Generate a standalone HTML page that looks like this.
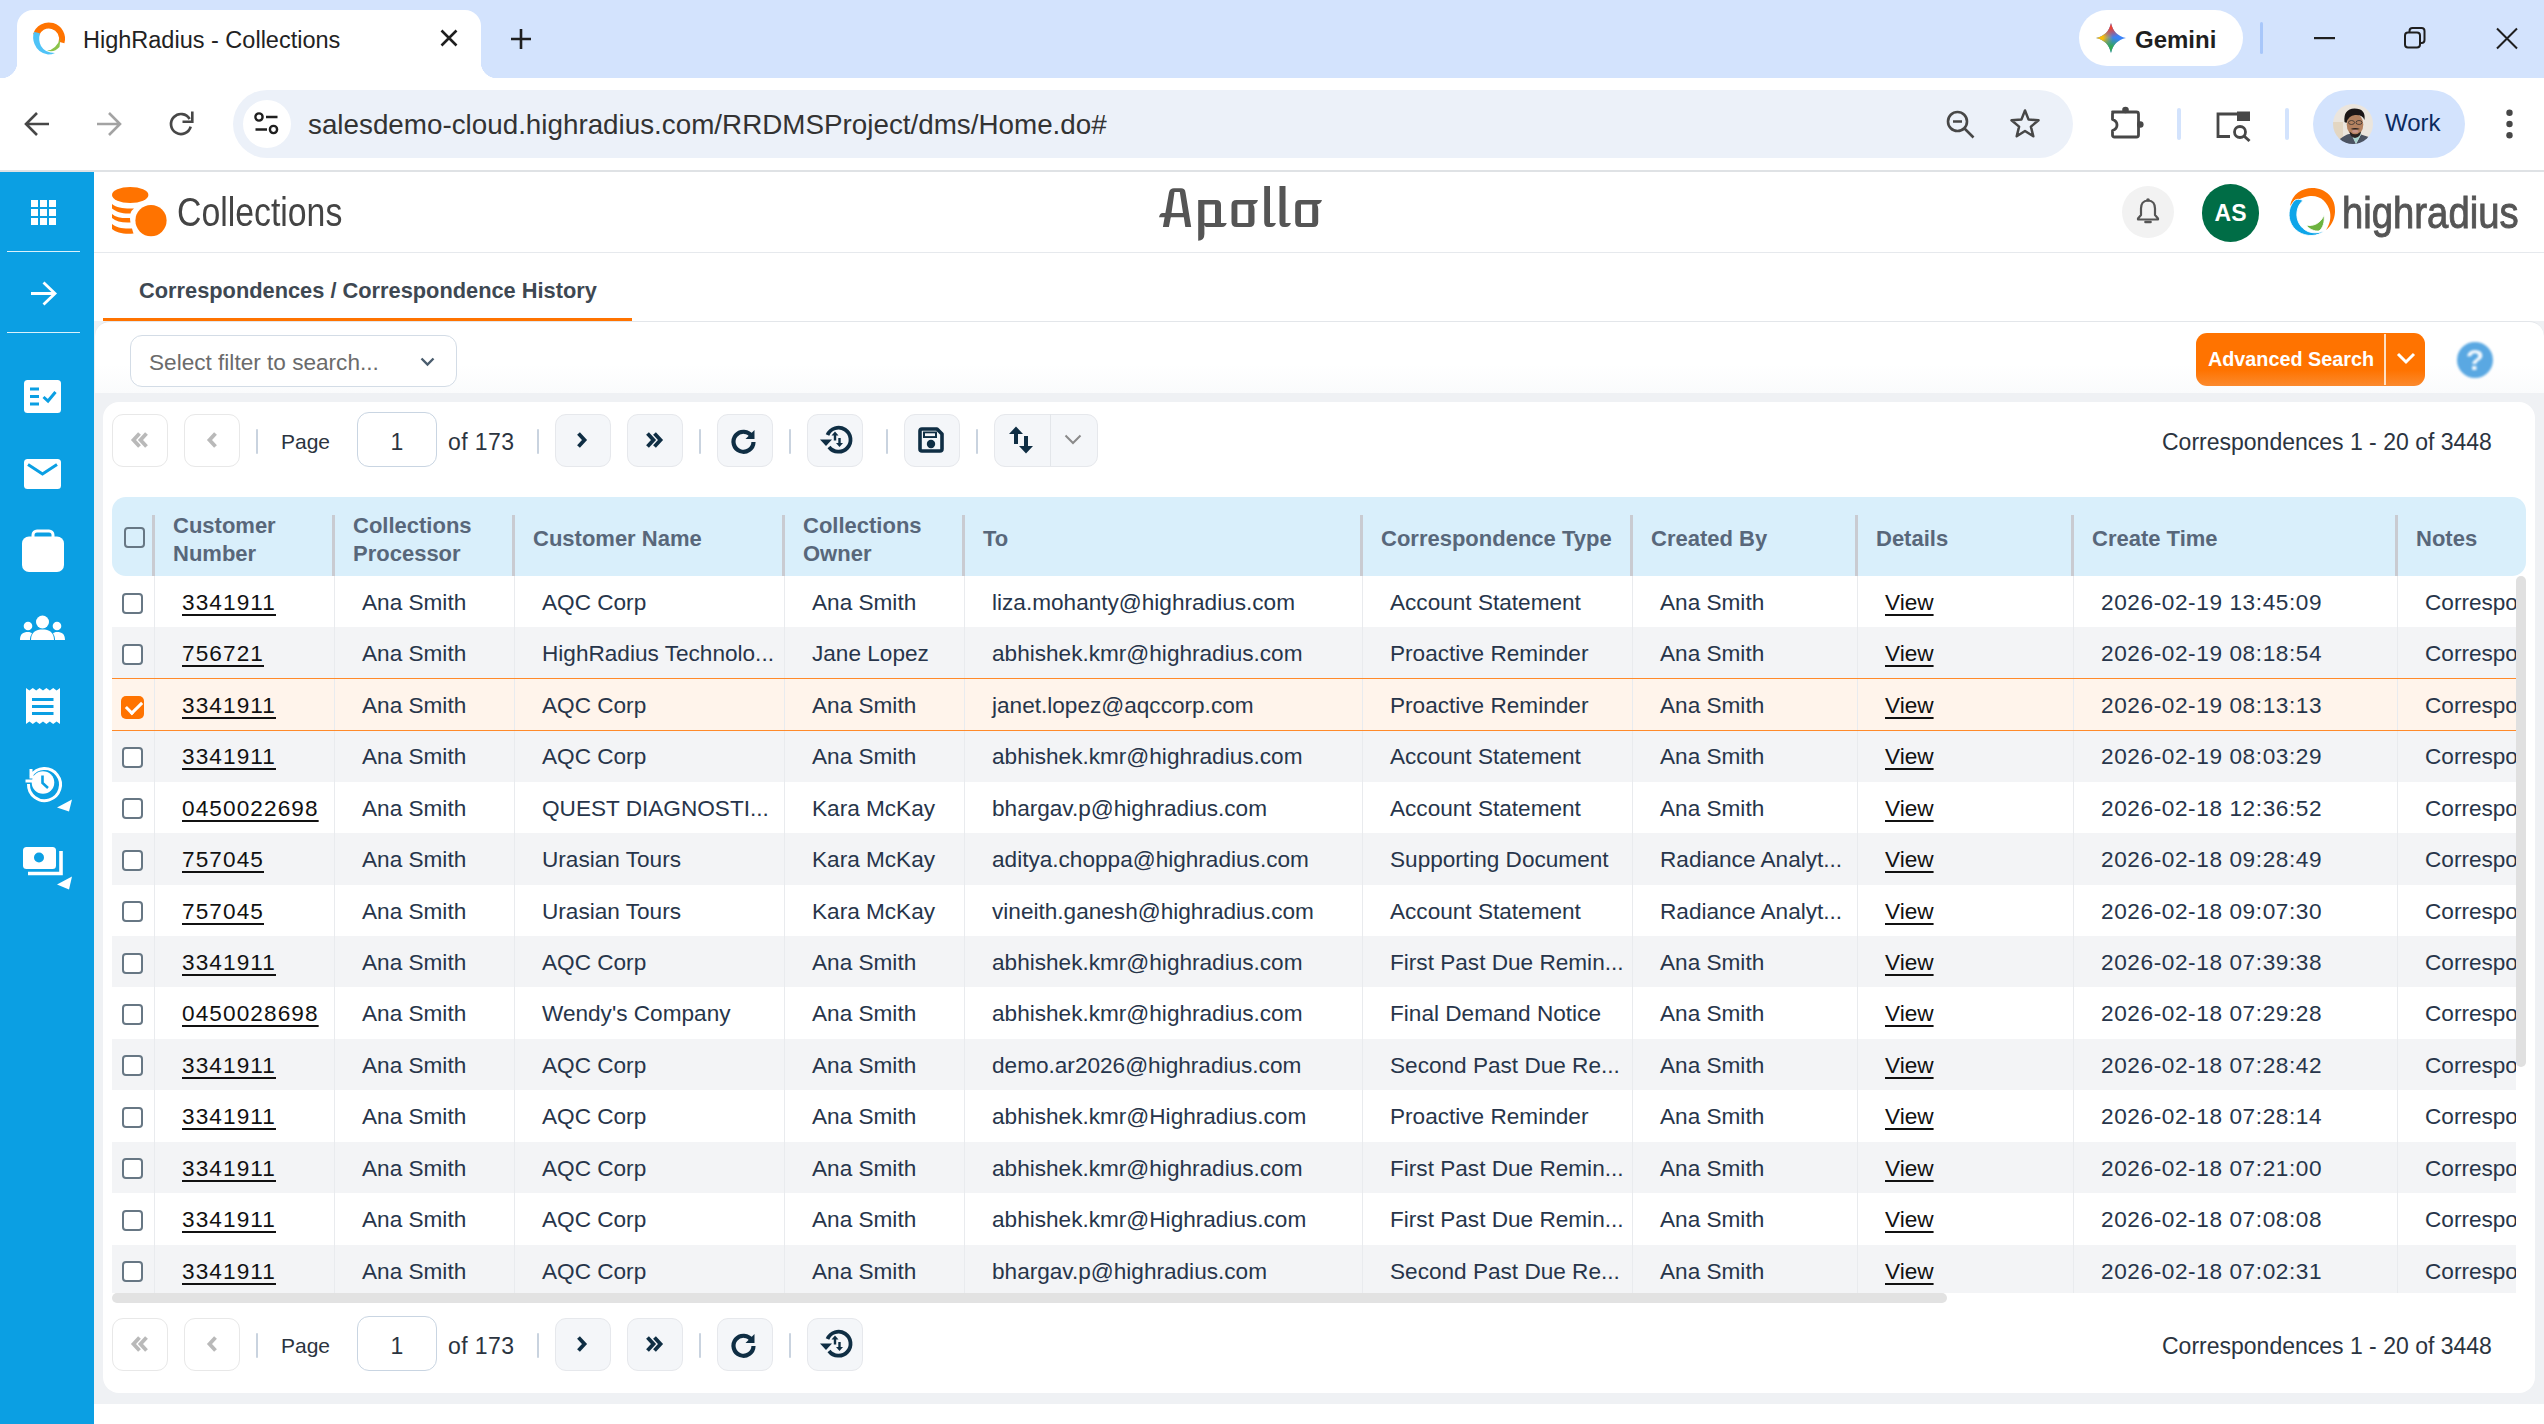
<!DOCTYPE html><html><head><meta charset="utf-8"><title>HighRadius - Collections</title><style>*{box-sizing:border-box;margin:0;padding:0}
html,body{width:2544px;height:1424px;overflow:hidden;background:#fff;font-family:"Liberation Sans",sans-serif;position:relative}
.abs{position:absolute}
svg{display:block;position:absolute;overflow:visible}
/* chrome */
#tabstrip{position:absolute;left:0;top:0;width:2544px;height:78px;background:#d3e3fd}
#tab{position:absolute;left:17px;top:10px;width:464px;height:68px;background:#fff;border-radius:16px 16px 0 0}
#tab:before,#tab:after{content:"";position:absolute;bottom:0;width:16px;height:16px}
#tab:before{left:-16px;background:radial-gradient(circle at 0 0,transparent 16px,#fff 16.5px)}
#tab:after{right:-16px;background:radial-gradient(circle at 100% 0,transparent 16px,#fff 16.5px)}
#tabtitle{position:absolute;left:83px;top:25.5px;font-size:23.5px;color:#222;line-height:28px;white-space:nowrap}
#gemini{position:absolute;left:2079px;top:10px;width:164px;height:56px;border-radius:28px;background:#fff}
#gemtxt{position:absolute;left:2135px;top:25.5px;font-size:24px;font-weight:bold;color:#1f1f1f;line-height:28px}
#toolbar{position:absolute;left:0;top:78px;width:2544px;height:92px;background:#fff}
#tbline{position:absolute;left:0;top:170px;width:2544px;height:2px;background:#dfe2e5}
#omni{position:absolute;left:233px;top:90px;width:1840px;height:68px;border-radius:34px;background:#ecf1f9}
#siteinfo{position:absolute;left:243px;top:100px;width:48px;height:48px;border-radius:24px;background:#fff}
#url{position:absolute;left:308px;top:108px;font-size:27.8px;color:#333;line-height:34px;white-space:nowrap}
#work{position:absolute;left:2313px;top:90px;width:152px;height:68px;border-radius:34px;background:#d3e3fd}
#worktxt{position:absolute;left:2385px;top:109px;font-size:24px;color:#0b2a5e;line-height:28px}
.vsep{position:absolute;width:3px;border-radius:2px;background:#a8c7fa}
/* app */
#sidebar{position:absolute;left:0;top:172px;width:94px;height:1252px;background:#0b9fe3}
.sbdiv{position:absolute;left:7px;width:73px;height:1px;background:rgba(255,255,255,.85)}
#apphdr{position:absolute;left:94px;top:172px;width:2450px;height:81px;background:#fff;border-bottom:1px solid #e6e9ed}
#colltxt{position:absolute;left:177px;top:188px;font-size:40px;color:#444;line-height:48px;transform:scaleX(.845);transform-origin:0 0;white-space:nowrap}
#crumb{position:absolute;left:139px;top:277.5px;font-size:21.8px;font-weight:bold;color:#3e4852;line-height:26px;white-space:nowrap}
#crumbline{position:absolute;left:103px;top:318px;width:529px;height:3px;background:#ff7300}
#content{position:absolute;left:94px;top:321px;width:2450px;height:1083px;background:#eff1f4}
#filtercard{position:absolute;left:95px;top:321px;width:2449px;height:72px;background:linear-gradient(#fff 60%,#fafbfc);border-radius:15px 15px 0 0;border-top:1px solid #e3e6ea}
#filtersel{position:absolute;left:130px;top:335px;width:327px;height:52px;border:1px solid #d3dce6;border-radius:12px;background:#fff}
#filtertxt{position:absolute;left:149px;top:350px;font-size:22.6px;color:#6b6b6b;line-height:26px;white-space:nowrap}
#advbtn{position:absolute;left:2196px;top:333px;width:229px;height:53px;border-radius:11px;background:linear-gradient(#ff7300 70%,#fb8a2e)}
#advtxt{position:absolute;left:2208px;top:346px;font-size:19.8px;font-weight:bold;color:#fff;line-height:26px;white-space:nowrap}
#advdiv{position:absolute;left:2384px;top:334px;width:2px;height:51px;background:rgba(255,235,215,.9)}
#card{position:absolute;left:103px;top:402px;width:2432px;height:991px;background:#fff;border-radius:16px}
.pbtn{position:absolute;width:55px;height:53px;border-radius:11px;border:1px solid #e6e8ec;background:#f4f6f9}
.pbtn.dis{background:#fff;border-color:#e8e8e8}
.psep{position:absolute;width:2px;height:25px;background:#c9d3df;border-radius:1px}
.ptxt{position:absolute;font-size:23px;color:#2b3440;line-height:28px;white-space:nowrap}
.pinput{position:absolute;width:80px;height:55px;border:1px solid #c9d5e2;border-radius:12px;background:#fff;font-size:23px;color:#2b3440;text-align:center;line-height:53px}
/* table */
#thead{position:absolute;left:112px;top:497px;width:2414px;height:79px;background:#d9effb;border-radius:14px}
.hbar{position:absolute;top:515px;width:3.5px;height:61px;background:#c9cbd1}
.htxt{position:absolute;top:525px;font-size:22px;font-weight:bold;color:#58677a;line-height:28px;white-space:nowrap}
.htxt.two{top:511.5px}
.hcb{position:absolute;left:123.5px;top:526.5px;width:21px;height:21px;border:2px solid #677784;border-radius:4px}
#tbody{position:absolute;left:112px;top:576px;width:2404px;height:717px;overflow:hidden}
#tinner{position:absolute;left:0;top:0;width:2500px;height:717px}
.row{position:absolute;left:0;width:2500px;height:51.43px;background:#fff}
.row.alt{background:#f3f4f6}
.row.sel{background:#fff4eb}
.selbd{position:absolute;left:0;width:2500px;height:52.9px;border-top:1.5px solid #ff8a2a;border-bottom:1.5px solid #ff8a2a}
.c{position:absolute;top:13px;font-size:22.6px;color:#27354a;line-height:28px;white-space:nowrap}
.c.lnk{color:#111;text-decoration:underline;text-decoration-thickness:2px;text-underline-offset:4px}
.vl{position:absolute;top:0;width:1px;height:717px;background:#e9ebee}
.cb{position:absolute;left:10px;top:16.5px;width:21px;height:21px;border:2px solid #677784;border-radius:4px;background:#fff}
.row.sel .cb{left:9px;top:17px;width:23px;height:23px;border:none;background:#ff7300;border-radius:5px}
#hscroll{position:absolute;left:112px;top:1293px;width:1835px;height:10px;border-radius:5px;background:#e2e2e2}
#vscroll{position:absolute;left:2516px;top:576px;width:10px;height:491px;border-radius:5px;background:#e0e0e0}

.c.num{letter-spacing:1.1px}
.c.dt{letter-spacing:.6px}
.row.sel .cb:after{content:"";position:absolute;left:4.5px;top:5px;width:13px;height:7px;border-left:3.5px solid #fff;border-bottom:3.5px solid #fff;transform:rotate(-45deg)}
</style></head><body><div id="tabstrip"></div>
<div id="tab"></div>
<svg style="left:33px;top:22px" width="32" height="32" viewBox="0 0 32 32">
  <path d="M3 13 A13 13 0 1 1 28.5 20.5" fill="none" stroke="#ff7300" stroke-width="6"/>
  <path d="M1 10 Q-1 16 1.5 22 Q5 31 15 32.5 Q19 32.5 22 31 Q12 31 8 24 Q5 18 7 11.5 Q4 10 1 10 Z" fill="#4fc3f7"/>
  <path d="M14 28.5 Q23 28 27.5 16 L26.5 25 Q21 31 14 28.5 Z" fill="#8bc34a"/>
</svg>
<div id="tabtitle">HighRadius - Collections</div>
<svg style="left:440px;top:29px" width="18" height="18" viewBox="0 0 18 18"><path d="M1.5 1.5L16.5 16.5M16.5 1.5L1.5 16.5" stroke="#1f1f1f" stroke-width="2.6"/></svg>
<svg style="left:510px;top:28px" width="22" height="22" viewBox="0 0 22 22"><path d="M11 1V21M1 11H21" stroke="#1f1f1f" stroke-width="2.6"/></svg>
<div id="gemini"></div>
<svg style="left:2096px;top:23px" width="30" height="30" viewBox="0 0 30 30">
  <defs>
  <radialGradient id="gy" cx="0" cy="15" r="17" gradientUnits="userSpaceOnUse"><stop offset="0" stop-color="#fbbc04"/><stop offset=".4" stop-color="#fbbc04"/><stop offset="1" stop-color="#fbbc04" stop-opacity="0"/></radialGradient>
  <radialGradient id="gr" cx="15" cy="0" r="15" gradientUnits="userSpaceOnUse"><stop offset="0" stop-color="#ea4335"/><stop offset=".35" stop-color="#ea4335"/><stop offset="1" stop-color="#ea4335" stop-opacity="0"/></radialGradient>
  <radialGradient id="gn" cx="15" cy="30" r="16" gradientUnits="userSpaceOnUse"><stop offset="0" stop-color="#34a853"/><stop offset=".4" stop-color="#34a853"/><stop offset="1" stop-color="#34a853" stop-opacity="0"/></radialGradient>
  </defs>
  <path d="M15 0 C17 8.5 21.5 13 30 15 C21.5 17 17 21.5 15 30 C13 21.5 8.5 17 0 15 C8.5 13 13 8.5 15 0Z" fill="#3b82f6"/>
  <path d="M15 0 C17 8.5 21.5 13 30 15 C21.5 17 17 21.5 15 30 C13 21.5 8.5 17 0 15 C8.5 13 13 8.5 15 0Z" fill="url(#gy)"/>
  <path d="M15 0 C17 8.5 21.5 13 30 15 C21.5 17 17 21.5 15 30 C13 21.5 8.5 17 0 15 C8.5 13 13 8.5 15 0Z" fill="url(#gn)"/>
  <path d="M15 0 C17 8.5 21.5 13 30 15 C21.5 17 17 21.5 15 30 C13 21.5 8.5 17 0 15 C8.5 13 13 8.5 15 0Z" fill="url(#gr)"/>
</svg>
<div id="gemtxt">Gemini</div>
<div class="vsep" style="left:2260px;top:22px;height:32px"></div>
<svg style="left:2314px;top:37px" width="21" height="3" viewBox="0 0 21 3"><rect x="0" y="0" width="21" height="2.2" fill="#1f1f1f"/></svg>
<svg style="left:2404px;top:27px" width="22" height="22" viewBox="0 0 22 22"><path d="M5.5 5.5 V4 a3 3 0 0 1 3-3 h9 a3 3 0 0 1 3 3 v9 a3 3 0 0 1-3 3 h-1.5" fill="none" stroke="#1f1f1f" stroke-width="2"/><rect x="1" y="5.5" width="15" height="15" rx="3" fill="none" stroke="#1f1f1f" stroke-width="2"/></svg>
<svg style="left:2496px;top:28px" width="22" height="21" viewBox="0 0 22 21"><path d="M1 0.5L21 20.5M21 0.5L1 20.5" stroke="#1f1f1f" stroke-width="2"/></svg>

<div id="toolbar"></div>
<div id="tbline"></div>
<svg style="left:24px;top:111px" width="26" height="26" viewBox="0 0 26 26"><path d="M25 13H3M13 2L2 13L13 24" fill="none" stroke="#474747" stroke-width="2.6"/></svg>
<svg style="left:96px;top:111px" width="26" height="26" viewBox="0 0 26 26"><path d="M1 13H23M13 2L24 13L13 24" fill="none" stroke="#a3a3a3" stroke-width="2.6"/></svg>
<svg style="left:168px;top:110px" width="28" height="28" viewBox="0 0 28 28"><path d="M21.66 9 A10 10 0 1 0 22.66 16.59" fill="none" stroke="#474747" stroke-width="2.7"/><path d="M24.3 1.5 V11.8 H14.5" fill="none" stroke="#474747" stroke-width="2.6"/></svg>
<div id="omni"></div>
<div id="siteinfo"></div>
<svg style="left:254px;top:112px" width="26" height="24" viewBox="0 0 26 24"><circle cx="5" cy="5" r="3.6" fill="none" stroke="#1f1f1f" stroke-width="2.4"/><path d="M12 5H23.5M1.5 17.5H13" stroke="#1f1f1f" stroke-width="2.4"/><circle cx="19.5" cy="17.5" r="3.6" fill="none" stroke="#1f1f1f" stroke-width="2.4"/></svg>
<div id="url">salesdemo-cloud.highradius.com/RRDMSProject/dms/Home.do#</div>
<svg style="left:1946px;top:110px" width="30" height="30" viewBox="0 0 30 30"><circle cx="11.5" cy="11.5" r="9.5" fill="none" stroke="#474747" stroke-width="2.6"/><path d="M7 11.5H16M18.5 18.5L27.5 27.5" stroke="#474747" stroke-width="2.6"/></svg>
<svg style="left:2009px;top:108px" width="32" height="31" viewBox="0 0 32 31"><path d="M16 2.5 L19.6 11.6 L29.5 12.3 L21.9 18.6 L24.3 28.3 L16 23 L7.7 28.3 L10.1 18.6 L2.5 12.3 L12.4 11.6 Z" fill="none" stroke="#474747" stroke-width="2.5" stroke-linejoin="round"/></svg>
<svg style="left:2108px;top:104px" width="38" height="36" viewBox="0 0 38 36"><path d="M4.5 8 H28.5 Q30.5 8 30.5 10 V31 Q30.5 33 28.5 33 H6.5 Q4.5 33 4.5 31 V26.5 Q9 25 9 21 Q9 17 4.5 15.5 V10 Q4.5 8 6.5 8 Z" fill="none" stroke="#474747" stroke-width="2.8" stroke-linejoin="round"/><circle cx="17.5" cy="6" r="3.3" fill="#474747"/><circle cx="32.3" cy="20.5" r="3.3" fill="#474747"/></svg>
<div class="vsep" style="left:2177px;top:108px;height:32px;width:4px;background:#d3e3fd"></div>
<svg style="left:2216px;top:110px" width="36" height="31" viewBox="0 0 36 31"><path d="M24 4 H2 V26.5 H14" fill="none" stroke="#474747" stroke-width="2.8"/><rect x="21" y="1.5" width="13" height="9" fill="#474747"/><path d="M21 10.5 H34" stroke="#474747" stroke-width="1"/><circle cx="24" cy="22" r="5.5" fill="none" stroke="#474747" stroke-width="2.8"/><path d="M28 26 L33.5 31" stroke="#474747" stroke-width="3"/></svg>
<div class="vsep" style="left:2285px;top:108px;height:32px;width:4px;background:#d3e3fd"></div>
<div id="work"></div>
<svg style="left:2333px;top:104px" width="40" height="40" viewBox="0 0 40 40">
  <defs><clipPath id="avc"><circle cx="20" cy="20" r="20"/></clipPath></defs>
  <filter id="avb"><feGaussianBlur stdDeviation=".45"/></filter><g clip-path="url(#avc)"><g filter="url(#avb)"><rect x="-2" y="-2" width="44" height="44" fill="#ebe5dd"/>
  <rect x="0" y="18" width="10" height="18" fill="#e3d6c2"/>
  <path d="M4 38 Q10 31 18 29.5 L23 40 L28 30.5 Q35 32 40 36 V40 H0Z" fill="#4b5262"/>
  <path d="M18 29.5 L23 40 L28 30.5 L26.5 28 L20 28Z" fill="#a9d5d0"/>
  <ellipse cx="22" cy="20.5" rx="8.3" ry="11" fill="#b58260"/>
  <path d="M11.5 18 Q10 5 21.5 4.5 Q33 4.5 31.5 16 Q29.5 10.5 22 11 Q15.5 11.5 13.5 19Z" fill="#1d1916"/>
  <path d="M16.5 27.5 Q22 33 28 27.5 Q27.5 33 22 34 Q17 33 16.5 27.5Z" fill="#2b2220"/><ellipse cx="22.3" cy="27.3" rx="3.2" ry="1.6" fill="#c7958a"/>
  <path d="M17.5 25 Q22 22.8 27 25 Q22 26.2 17.5 25Z" fill="#2a211e"/>
  
  <ellipse cx="18.5" cy="18.5" rx="3" ry="2" fill="none" stroke="#3a3330" stroke-width=".8"/>
  <ellipse cx="26" cy="18.5" rx="3" ry="2" fill="none" stroke="#3a3330" stroke-width=".8"/>
  </g></g>
</svg>
<div id="worktxt">Work</div>
<svg style="left:2506px;top:107px" width="7" height="34" viewBox="0 0 7 34"><circle cx="3.5" cy="5.7" r="3.2" fill="#474747"/><circle cx="3.5" cy="17" r="3.2" fill="#474747"/><circle cx="3.5" cy="28.3" r="3.2" fill="#474747"/></svg>
<div id="sidebar"></div>
<svg style="left:31px;top:200px" width="25" height="25" viewBox="0 0 25 25" fill="#fff"><rect x="0" y="0" width="7" height="7"/><rect x="9" y="0" width="7" height="7"/><rect x="18" y="0" width="7" height="7"/><rect x="0" y="9" width="7" height="7"/><rect x="9" y="9" width="7" height="7"/><rect x="18" y="9" width="7" height="7"/><rect x="0" y="18" width="7" height="7"/><rect x="9" y="18" width="7" height="7"/><rect x="18" y="18" width="7" height="7"/></svg>
<div class="sbdiv" style="top:251px"></div>
<svg style="left:31px;top:281px" width="26" height="25" viewBox="0 0 26 25"><path d="M0 12.5H23M12.5 1.5L24 12.5L12.5 23.5" fill="none" stroke="#fff" stroke-width="2.8"/></svg>
<div class="sbdiv" style="top:332px"></div>
<!-- checklist -->
<svg style="left:24px;top:380px" width="37" height="33" viewBox="0 0 37 33"><rect x="0" y="0" width="37" height="33" rx="3.5" fill="#fff"/><path d="M6 9H15M6 16.5H15M6 24H15" stroke="#0b9fe3" stroke-width="3"/><path d="M19.5 17L24 21L31.5 12" fill="none" stroke="#0b9fe3" stroke-width="3"/></svg>
<!-- envelope -->
<svg style="left:24px;top:459px" width="37" height="30" viewBox="0 0 37 30"><rect x="0" y="0" width="37" height="30" rx="3.5" fill="#fff"/><path d="M4 5.5L18.5 15L33 5.5" fill="none" stroke="#0b9fe3" stroke-width="3"/></svg>
<!-- briefcase -->
<svg style="left:22px;top:530px" width="42" height="42" viewBox="0 0 42 42"><path d="M11 8 V5 a4 4 0 0 1 4-4 h12 a4 4 0 0 1 4 4 v3" fill="none" stroke="#fff" stroke-width="3"/><rect x="0" y="6.5" width="42" height="35.5" rx="7" fill="#fff"/></svg>
<!-- people -->
<svg style="left:20px;top:615px" width="45" height="25" viewBox="0 0 45 25" fill="#fff"><circle cx="22.5" cy="7" r="6.5"/><path d="M11 25 C11 17 16 14.5 22.5 14.5 C29 14.5 34 17 34 25Z"/><circle cx="8" cy="11" r="4.3"/><path d="M0 25 C0 19 3 17 8 17 C10 17 11 17.5 12 18.5 C10.5 20.5 10 22.5 10 25Z"/><circle cx="37" cy="11" r="4.3"/><path d="M45 25 C45 19 42 17 37 17 C35 17 34 17.5 33 18.5 C34.5 20.5 35 22.5 35 25Z"/></svg>
<!-- receipt -->
<svg style="left:26px;top:688px" width="34" height="36" viewBox="0 0 34 36"><path d="M0 0 L3.4 2.5 L6.8 0 L10.2 2.5 L13.6 0 L17 2.5 L20.4 0 L23.8 2.5 L27.2 0 L30.6 2.5 L34 0 V36 L30.6 33.5 L27.2 36 L23.8 33.5 L20.4 36 L17 33.5 L13.6 36 L10.2 33.5 L6.8 36 L3.4 33.5 L0 36Z" fill="#fff"/><path d="M6 11.5H27.5M6 18.5H27.5M6 25.5H27.5" stroke="#0b9fe3" stroke-width="3"/></svg>
<!-- history -->
<svg style="left:24px;top:764px" width="50" height="50" viewBox="0 0 50 50"><path d="M7 12 A16 16 0 1 1 4.5 20" fill="none" stroke="#fff" stroke-width="3"/><path d="M1.5 17 H8 M7 5 V13 H15" fill="none" stroke="#fff" stroke-width="3"/><circle cx="19" cy="18.5" r="11.3" fill="#fff"/><path d="M18.5 11.5 V19 L24 24" fill="none" stroke="#0b9fe3" stroke-width="2.6"/><path d="M33 43.5 L48 35.5 L45 47.5Z" fill="#fff"/></svg>
<!-- money -->
<svg style="left:22px;top:846px" width="52" height="46" viewBox="0 0 52 46"><rect x="1" y="1" width="33" height="22" rx="3.5" fill="#fff"/><circle cx="17" cy="11.5" r="5" fill="#0b9fe3"/><path d="M6 27.5 H39 V5" fill="none" stroke="#fff" stroke-width="3.6"/><path d="M35 38.5 L50 30.5 L47 43.5Z" fill="#fff"/></svg>

<div id="apphdr"></div>
<svg style="left:111px;top:186px" width="57" height="52" viewBox="0 0 57 52" fill="#ff7300">
  <ellipse cx="19.2" cy="9" rx="18.2" ry="8"/>
  <path d="M1 18 C6 22 14 23 23 22.5 C21 24 20 25.5 19.5 27.5 C12 28 5 26 1 22.5Z"/>
  <path d="M1 28 C5 31.5 12 32.5 19 32 C19 33.5 19.2 35 19.5 36.5 C11.5 37 5 35.5 1 32Z"/>
  <path d="M1 38 C5 41.5 12 43 21 42.5 C21.5 44.5 22 46 22.5 47.5 C13 48.5 5 46.5 1 43Z"/>
  <circle cx="40" cy="34.6" r="15.6"/>
</svg>
<div id="colltxt">Collections</div>
<!-- Apollo -->
<svg style="left:1158px;top:185px" width="166" height="57" viewBox="1158 185 166 57" fill="#555">
  
  <path d="M1162.9 227 L1169 192.5 Q1170 188.3 1174 188.3 L1181 188.3 Q1185 188.3 1185.5 192.5 L1191.2 227 L1185.3 227 L1183.8 217.2 L1170.8 217.2 L1168.9 227 Z M1171.5 213 L1183 213 L1179.8 192 L1174.5 192Z" fill-rule="evenodd"/>
  <path d="M1159 217.2 L1171 217.2 L1171.6 213 L1162.5 213 Q1160 213 1159 217.2Z"/>
  <path d="M1198.2 200 L1216 200 Q1221 200 1221 205 L1221 223 L1226.8 223 Q1225.5 227 1222 227 L1206.5 227 Q1205 227 1204.4 225 L1204.4 234 Q1204.4 240.8 1198.2 240.8 Z M1204.4 204.4 L1204.4 223 L1215 223 L1215 204.4Z" fill-rule="evenodd"/>
  <path d="M1236.5 200 L1258 200 Q1256.5 204.4 1253 204.4 Q1254.5 206 1254.5 209 L1254.5 222 Q1254.5 227 1249.5 227 L1236.5 227 Q1231.5 227 1231.5 222 L1231.5 205 Q1231.5 200 1236.5 200Z M1237.4 204.4 L1237.4 223 L1248.3 223 L1248.3 204.4Z" fill-rule="evenodd"/>
  <path d="M1264.2 186 L1270 186 L1270 223 L1276 223 Q1274.5 227 1271 227 L1268.5 227 Q1264.2 227 1264.2 222Z"/>
  <path d="M1279.5 186 L1285.5 186 L1285.5 223 L1291 223 Q1289.5 227 1286 227 L1284 227 Q1279.5 227 1279.5 222Z"/>
  <path d="M1300 200 L1322 200 Q1320.5 204.4 1317 204.4 Q1318.2 206 1318.2 209 L1318.2 222 Q1318.2 227 1313.2 227 L1300.2 227 Q1295.2 227 1295.2 222 L1295.2 205 Q1295.2 200 1300 200Z M1301 204.4 L1301 223 L1312.2 223 L1312.2 204.4Z" fill-rule="evenodd"/>
</svg>
<!-- bell -->
<div class="abs" style="left:2122px;top:186px;width:52px;height:52px;border-radius:26px;background:#f2f2f2"></div>
<svg style="left:2136px;top:198px" width="24" height="27" viewBox="0 0 24 27"><path d="M12 2.5 C7 2.5 5 6 5 10.5 V17 L2 20.5 V21.5 H22 V20.5 L19 17 V10.5 C19 6 17 2.5 12 2.5Z" fill="none" stroke="#555" stroke-width="2.2" stroke-linejoin="round"/><circle cx="12" cy="2" r="1.8" fill="#555"/><path d="M9.5 24 H14.5" stroke="#555" stroke-width="2.6" stroke-linecap="round"/></svg>
<div class="abs" style="left:2202px;top:184px;width:57px;height:58px;border-radius:29px;background:#006d46;color:#fff;font-weight:bold;font-size:23px;line-height:58px;text-align:center">AS</div>
<!-- highradius logo -->
<svg style="left:2286px;top:186px" width="52" height="52" viewBox="0 0 52 52">
  <path d="M4 20 C6 8 16 2 26 2 C40 2 50 12 49 26 C48.5 34 45 40 40 44 C44 38 45 32 44 26 C42 16 34 9 24 10 C16 11 9 15 4 20Z" fill="#ff7300"/>
  <path d="M9 14 C3 20 2 28 4 35 C7 44 16 50 26 49.5 C31 49.3 35 47.5 38 45 C33 47 27 47.5 22 45.5 C14 42 10 34 11 26 C11.5 21 14 17 17 14.5 C14 13 11 13 9 14Z" fill="#0ea5e9" stroke="#fff" stroke-width=".9"/>
  <path d="M20 39 C27 41 35 37 38 29 C39 36 37 42 33 45 C28 45.5 23 43 20 39Z" fill="#6db33f" stroke="#fff" stroke-width=".9"/>
</svg>
<div class="abs" style="left:2342px;top:187px;font-size:44px;color:#555;line-height:52px;transform:scaleX(.87);transform-origin:0 0;white-space:nowrap;-webkit-text-stroke:.9px #555">highradius</div>

<div id="crumb">Correspondences / Correspondence History</div>
<div id="content"></div>
<div id="crumbline"></div>
<div id="filtercard"></div>
<div id="filtersel"></div>
<div id="filtertxt">Select filter to search...</div>
<svg style="left:420px;top:357px" width="15" height="10" viewBox="0 0 15 10"><path d="M1.5 1.5L7.5 7.5L13.5 1.5" fill="none" stroke="#4a5d6e" stroke-width="2.4"/></svg>
<div id="advbtn"></div>
<div id="advtxt">Advanced Search</div>
<div id="advdiv"></div>
<svg style="left:2396px;top:352px" width="20" height="13" viewBox="0 0 20 13"><path d="M2 2L10 10L18 2" fill="none" stroke="#fff" stroke-width="3"/></svg>
<div class="abs" style="left:2457px;top:342px;width:36px;height:36px;border-radius:18px;background:#5aa8e2;filter:blur(1px)"></div>
<div class="abs" style="left:2457px;top:340px;width:36px;height:40px;font-size:30px;font-weight:bold;color:#f4f9fd;text-align:center;line-height:40px;filter:blur(1.2px)">?</div>

<div id="card"></div>
<div class="pbtn dis" style="left:112px;top:414px;width:56px"></div><svg style="left:131px;top:432px" width="18" height="16" viewBox="0 0 18 16"><path d="M8.5 1.5L2.5 8L8.5 14.5M15.5 1.5L9.5 8L15.5 14.5" fill="none" stroke="#b9b9b9" stroke-width="3.8"/></svg><div class="pbtn dis" style="left:184px;top:414px;width:56px"></div><svg style="left:206px;top:432px" width="12" height="16" viewBox="0 0 12 16"><path d="M9.5 1.5L3.5 8L9.5 14.5" fill="none" stroke="#b9b9b9" stroke-width="3.8"/></svg><div class="psep" style="left:256px;top:429px"></div><div class="ptxt" style="left:281px;top:428px;font-size:21px">Page</div><div class="pinput" style="left:357px;top:412px;line-height:58px">1</div><div class="ptxt" style="left:448px;top:428px;letter-spacing:.4px">of 173</div><div class="psep" style="left:537px;top:429px"></div><div class="pbtn" style="left:555px;top:414px;width:56px"></div><svg style="left:576px;top:432px" width="12" height="16" viewBox="0 0 12 16"><path d="M2.5 1.5L8.5 8L2.5 14.5" fill="none" stroke="#0f2e44" stroke-width="3.8"/></svg><div class="pbtn" style="left:627px;top:414px;width:56px"></div><svg style="left:645px;top:432px" width="18" height="16" viewBox="0 0 18 16"><path d="M2.5 1.5L8.5 8L2.5 14.5M9.5 1.5L15.5 8L9.5 14.5" fill="none" stroke="#0f2e44" stroke-width="3.8"/></svg><div class="psep" style="left:699px;top:429px"></div><div class="pbtn" style="left:717px;top:414px;width:56px"></div><svg style="left:731px;top:427px" width="26" height="26" viewBox="0 0 26 26"><path d="M21 9.5 A10 10 0 1 0 22.5 15" fill="none" stroke="#0f2e44" stroke-width="4.2"/><path d="M23.5 3 V12 H14.5Z" fill="#0f2e44"/></svg><div class="psep" style="left:789px;top:429px"></div><div class="pbtn" style="left:807px;top:414px;width:56px"></div><svg style="left:819px;top:425px" width="32" height="30" viewBox="0 0 32 30"><path d="M8.5 10 A12 12 0 1 1 10 22" fill="none" stroke="#0f2e44" stroke-width="3.8"/><path d="M1 14.5 H13 L7 21Z" fill="#0f2e44"/><path d="M16 6.5L12.5 10.5H14.8V15.5H17.2V10.5H19.5Z M20.5 22L24 18H21.7V13H19.3V18H17Z" fill="#0f2e44"/></svg><div class="psep" style="left:886px;top:429px"></div><div class="pbtn" style="left:904px;top:414px;width:56px"></div><svg style="left:918px;top:427px" width="26" height="26" viewBox="0 0 26 26"><path d="M2 4 a2 2 0 0 1 2-2 H19 L24 7 V22 a2 2 0 0 1-2 2 H4 a2 2 0 0 1-2-2Z" fill="none" stroke="#0f2e44" stroke-width="3.6" stroke-linejoin="round"/><rect x="5" y="4.5" width="14" height="6.5" fill="#0f2e44"/><rect x="7" y="6.3" width="10" height="2.8" fill="#f4f6f9"/><circle cx="13" cy="17" r="4.2" fill="#0f2e44"/></svg><div class="psep" style="left:976px;top:429px"></div><div class="pbtn" style="left:994px;top:414px;width:104px"></div><svg style="left:1008px;top:426px" width="26" height="28" viewBox="0 0 26 28"><path d="M8 0.5L1 8H6V18H10V8H15Z M18 27.5L25 20H20V10H16V20H11Z" fill="#0f2e44"/></svg><div class="abs" style="left:1050px;top:414px;width:1px;height:52px;background:#e3e6ea"></div><svg style="left:1064px;top:434px" width="18" height="11" viewBox="0 0 18 11"><path d="M1.5 1.5L9 9L16.5 1.5" fill="none" stroke="#8a8a8a" stroke-width="2"/></svg><div class="ptxt" style="left:2162px;top:428px">Correspondences 1 - 20 of 3448</div><div class="pbtn dis" style="left:112px;top:1318px;width:56px"></div><svg style="left:131px;top:1336px" width="18" height="16" viewBox="0 0 18 16"><path d="M8.5 1.5L2.5 8L8.5 14.5M15.5 1.5L9.5 8L15.5 14.5" fill="none" stroke="#b9b9b9" stroke-width="3.8"/></svg><div class="pbtn dis" style="left:184px;top:1318px;width:56px"></div><svg style="left:206px;top:1336px" width="12" height="16" viewBox="0 0 12 16"><path d="M9.5 1.5L3.5 8L9.5 14.5" fill="none" stroke="#b9b9b9" stroke-width="3.8"/></svg><div class="psep" style="left:256px;top:1333px"></div><div class="ptxt" style="left:281px;top:1332px;font-size:21px">Page</div><div class="pinput" style="left:357px;top:1316px;line-height:58px">1</div><div class="ptxt" style="left:448px;top:1332px;letter-spacing:.4px">of 173</div><div class="psep" style="left:537px;top:1333px"></div><div class="pbtn" style="left:555px;top:1318px;width:56px"></div><svg style="left:576px;top:1336px" width="12" height="16" viewBox="0 0 12 16"><path d="M2.5 1.5L8.5 8L2.5 14.5" fill="none" stroke="#0f2e44" stroke-width="3.8"/></svg><div class="pbtn" style="left:627px;top:1318px;width:56px"></div><svg style="left:645px;top:1336px" width="18" height="16" viewBox="0 0 18 16"><path d="M2.5 1.5L8.5 8L2.5 14.5M9.5 1.5L15.5 8L9.5 14.5" fill="none" stroke="#0f2e44" stroke-width="3.8"/></svg><div class="psep" style="left:699px;top:1333px"></div><div class="pbtn" style="left:717px;top:1318px;width:56px"></div><svg style="left:731px;top:1331px" width="26" height="26" viewBox="0 0 26 26"><path d="M21 9.5 A10 10 0 1 0 22.5 15" fill="none" stroke="#0f2e44" stroke-width="4.2"/><path d="M23.5 3 V12 H14.5Z" fill="#0f2e44"/></svg><div class="psep" style="left:789px;top:1333px"></div><div class="pbtn" style="left:807px;top:1318px;width:56px"></div><svg style="left:819px;top:1329px" width="32" height="30" viewBox="0 0 32 30"><path d="M8.5 10 A12 12 0 1 1 10 22" fill="none" stroke="#0f2e44" stroke-width="3.8"/><path d="M1 14.5 H13 L7 21Z" fill="#0f2e44"/><path d="M16 6.5L12.5 10.5H14.8V15.5H17.2V10.5H19.5Z M20.5 22L24 18H21.7V13H19.3V18H17Z" fill="#0f2e44"/></svg><div class="ptxt" style="left:2162px;top:1332px">Correspondences 1 - 20 of 3448</div><div id="thead"></div><div class="hcb"></div><div class="hbar" style="left:151.5px"></div><div class="htxt two" style="left:173px">Customer<br>Number</div><div class="hbar" style="left:331.5px"></div><div class="htxt two" style="left:353px">Collections<br>Processor</div><div class="hbar" style="left:511.5px"></div><div class="htxt" style="left:533px">Customer Name</div><div class="hbar" style="left:781.5px"></div><div class="htxt two" style="left:803px">Collections<br>Owner</div><div class="hbar" style="left:961.5px"></div><div class="htxt" style="left:983px">To</div><div class="hbar" style="left:1359.5px"></div><div class="htxt" style="left:1381px">Correspondence Type</div><div class="hbar" style="left:1629.5px"></div><div class="htxt" style="left:1651px">Created By</div><div class="hbar" style="left:1854.5px"></div><div class="htxt" style="left:1876px">Details</div><div class="hbar" style="left:2070.5px"></div><div class="htxt" style="left:2092px">Create Time</div><div class="hbar" style="left:2394.5px"></div><div class="htxt" style="left:2416px">Notes</div><div id="tbody"><div id="tinner"><div class="row" style="top:0.0px"><div class="cb"></div><div class="c lnk num" style="left:70px">3341911</div><div class="c" style="left:250px">Ana Smith</div><div class="c" style="left:430px">AQC Corp</div><div class="c" style="left:700px">Ana Smith</div><div class="c" style="left:880px">liza.mohanty@highradius.com</div><div class="c" style="left:1278px">Account Statement</div><div class="c" style="left:1548px">Ana Smith</div><div class="c lnk" style="left:1773px">View</div><div class="c dt" style="left:1989px">2026-02-19 13:45:09</div><div class="c" style="left:2313px">Correspo</div></div><div class="row alt" style="top:51.4px"><div class="cb"></div><div class="c lnk num" style="left:70px">756721</div><div class="c" style="left:250px">Ana Smith</div><div class="c" style="left:430px">HighRadius Technolo...</div><div class="c" style="left:700px">Jane Lopez</div><div class="c" style="left:880px">abhishek.kmr@highradius.com</div><div class="c" style="left:1278px">Proactive Reminder</div><div class="c" style="left:1548px">Ana Smith</div><div class="c lnk" style="left:1773px">View</div><div class="c dt" style="left:1989px">2026-02-19 08:18:54</div><div class="c" style="left:2313px">Correspo</div></div><div class="row sel" style="top:102.9px"><div class="cb on"></div><div class="c lnk num" style="left:70px">3341911</div><div class="c" style="left:250px">Ana Smith</div><div class="c" style="left:430px">AQC Corp</div><div class="c" style="left:700px">Ana Smith</div><div class="c" style="left:880px">janet.lopez@aqccorp.com</div><div class="c" style="left:1278px">Proactive Reminder</div><div class="c" style="left:1548px">Ana Smith</div><div class="c lnk" style="left:1773px">View</div><div class="c dt" style="left:1989px">2026-02-19 08:13:13</div><div class="c" style="left:2313px">Correspo</div></div><div class="row alt" style="top:154.3px"><div class="cb"></div><div class="c lnk num" style="left:70px">3341911</div><div class="c" style="left:250px">Ana Smith</div><div class="c" style="left:430px">AQC Corp</div><div class="c" style="left:700px">Ana Smith</div><div class="c" style="left:880px">abhishek.kmr@highradius.com</div><div class="c" style="left:1278px">Account Statement</div><div class="c" style="left:1548px">Ana Smith</div><div class="c lnk" style="left:1773px">View</div><div class="c dt" style="left:1989px">2026-02-19 08:03:29</div><div class="c" style="left:2313px">Correspo</div></div><div class="row" style="top:205.7px"><div class="cb"></div><div class="c lnk num" style="left:70px">0450022698</div><div class="c" style="left:250px">Ana Smith</div><div class="c" style="left:430px">QUEST DIAGNOSTI...</div><div class="c" style="left:700px">Kara McKay</div><div class="c" style="left:880px">bhargav.p@highradius.com</div><div class="c" style="left:1278px">Account Statement</div><div class="c" style="left:1548px">Ana Smith</div><div class="c lnk" style="left:1773px">View</div><div class="c dt" style="left:1989px">2026-02-18 12:36:52</div><div class="c" style="left:2313px">Correspo</div></div><div class="row alt" style="top:257.1px"><div class="cb"></div><div class="c lnk num" style="left:70px">757045</div><div class="c" style="left:250px">Ana Smith</div><div class="c" style="left:430px">Urasian Tours</div><div class="c" style="left:700px">Kara McKay</div><div class="c" style="left:880px">aditya.choppa@highradius.com</div><div class="c" style="left:1278px">Supporting Document</div><div class="c" style="left:1548px">Radiance Analyt...</div><div class="c lnk" style="left:1773px">View</div><div class="c dt" style="left:1989px">2026-02-18 09:28:49</div><div class="c" style="left:2313px">Correspo</div></div><div class="row" style="top:308.6px"><div class="cb"></div><div class="c lnk num" style="left:70px">757045</div><div class="c" style="left:250px">Ana Smith</div><div class="c" style="left:430px">Urasian Tours</div><div class="c" style="left:700px">Kara McKay</div><div class="c" style="left:880px">vineith.ganesh@highradius.com</div><div class="c" style="left:1278px">Account Statement</div><div class="c" style="left:1548px">Radiance Analyt...</div><div class="c lnk" style="left:1773px">View</div><div class="c dt" style="left:1989px">2026-02-18 09:07:30</div><div class="c" style="left:2313px">Correspo</div></div><div class="row alt" style="top:360.0px"><div class="cb"></div><div class="c lnk num" style="left:70px">3341911</div><div class="c" style="left:250px">Ana Smith</div><div class="c" style="left:430px">AQC Corp</div><div class="c" style="left:700px">Ana Smith</div><div class="c" style="left:880px">abhishek.kmr@highradius.com</div><div class="c" style="left:1278px">First Past Due Remin...</div><div class="c" style="left:1548px">Ana Smith</div><div class="c lnk" style="left:1773px">View</div><div class="c dt" style="left:1989px">2026-02-18 07:39:38</div><div class="c" style="left:2313px">Correspo</div></div><div class="row" style="top:411.4px"><div class="cb"></div><div class="c lnk num" style="left:70px">0450028698</div><div class="c" style="left:250px">Ana Smith</div><div class="c" style="left:430px">Wendy&#39;s Company</div><div class="c" style="left:700px">Ana Smith</div><div class="c" style="left:880px">abhishek.kmr@highradius.com</div><div class="c" style="left:1278px">Final Demand Notice</div><div class="c" style="left:1548px">Ana Smith</div><div class="c lnk" style="left:1773px">View</div><div class="c dt" style="left:1989px">2026-02-18 07:29:28</div><div class="c" style="left:2313px">Correspo</div></div><div class="row alt" style="top:462.9px"><div class="cb"></div><div class="c lnk num" style="left:70px">3341911</div><div class="c" style="left:250px">Ana Smith</div><div class="c" style="left:430px">AQC Corp</div><div class="c" style="left:700px">Ana Smith</div><div class="c" style="left:880px">demo.ar2026@highradius.com</div><div class="c" style="left:1278px">Second Past Due Re...</div><div class="c" style="left:1548px">Ana Smith</div><div class="c lnk" style="left:1773px">View</div><div class="c dt" style="left:1989px">2026-02-18 07:28:42</div><div class="c" style="left:2313px">Correspo</div></div><div class="row" style="top:514.3px"><div class="cb"></div><div class="c lnk num" style="left:70px">3341911</div><div class="c" style="left:250px">Ana Smith</div><div class="c" style="left:430px">AQC Corp</div><div class="c" style="left:700px">Ana Smith</div><div class="c" style="left:880px">abhishek.kmr@Highradius.com</div><div class="c" style="left:1278px">Proactive Reminder</div><div class="c" style="left:1548px">Ana Smith</div><div class="c lnk" style="left:1773px">View</div><div class="c dt" style="left:1989px">2026-02-18 07:28:14</div><div class="c" style="left:2313px">Correspo</div></div><div class="row alt" style="top:565.7px"><div class="cb"></div><div class="c lnk num" style="left:70px">3341911</div><div class="c" style="left:250px">Ana Smith</div><div class="c" style="left:430px">AQC Corp</div><div class="c" style="left:700px">Ana Smith</div><div class="c" style="left:880px">abhishek.kmr@highradius.com</div><div class="c" style="left:1278px">First Past Due Remin...</div><div class="c" style="left:1548px">Ana Smith</div><div class="c lnk" style="left:1773px">View</div><div class="c dt" style="left:1989px">2026-02-18 07:21:00</div><div class="c" style="left:2313px">Correspo</div></div><div class="row" style="top:617.2px"><div class="cb"></div><div class="c lnk num" style="left:70px">3341911</div><div class="c" style="left:250px">Ana Smith</div><div class="c" style="left:430px">AQC Corp</div><div class="c" style="left:700px">Ana Smith</div><div class="c" style="left:880px">abhishek.kmr@Highradius.com</div><div class="c" style="left:1278px">First Past Due Remin...</div><div class="c" style="left:1548px">Ana Smith</div><div class="c lnk" style="left:1773px">View</div><div class="c dt" style="left:1989px">2026-02-18 07:08:08</div><div class="c" style="left:2313px">Correspo</div></div><div class="row alt" style="top:668.6px"><div class="cb"></div><div class="c lnk num" style="left:70px">3341911</div><div class="c" style="left:250px">Ana Smith</div><div class="c" style="left:430px">AQC Corp</div><div class="c" style="left:700px">Ana Smith</div><div class="c" style="left:880px">bhargav.p@highradius.com</div><div class="c" style="left:1278px">Second Past Due Re...</div><div class="c" style="left:1548px">Ana Smith</div><div class="c lnk" style="left:1773px">View</div><div class="c dt" style="left:1989px">2026-02-18 07:02:31</div><div class="c" style="left:2313px">Correspo</div></div><div class="vl" style="left:42px"></div><div class="vl" style="left:222px"></div><div class="vl" style="left:402px"></div><div class="vl" style="left:672px"></div><div class="vl" style="left:852px"></div><div class="vl" style="left:1250px"></div><div class="vl" style="left:1520px"></div><div class="vl" style="left:1745px"></div><div class="vl" style="left:1961px"></div><div class="vl" style="left:2285px"></div><div class="selbd" style="top:102.36px"></div></div></div><div id="hscroll"></div><div id="vscroll"></div></body></html>
